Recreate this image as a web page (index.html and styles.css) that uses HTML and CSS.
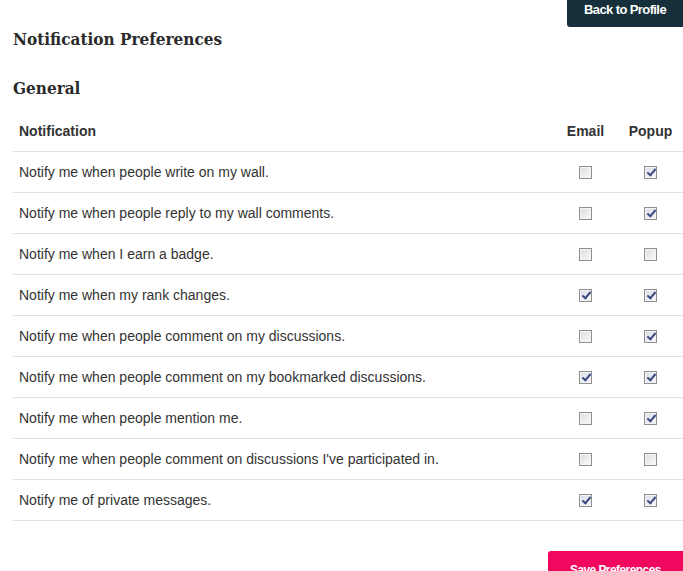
FILE: index.html
```html
<!DOCTYPE html>
<html>
<head>
<meta charset="utf-8">
<link rel="stylesheet" href="styles.css">
</head>
<body>
<div class="page">
  <div class="topbar"><a class="btn-back" href="#">Back to Profile</a></div>
  <h1 class="title">Notification Preferences</h1>
  <h2 class="section">General</h2>
  <table class="prefs">
    <thead>
      <tr><th class="col-name">Notification</th><th class="col-chk">Email</th><th class="col-chk">Popup</th></tr>
    </thead>
    <tbody>
      <tr><td>Notify me when people write on my wall.</td><td class="c"><span class="cb"></span></td><td class="c"><span class="cb on"></span></td></tr>
      <tr><td>Notify me when people reply to my wall comments.</td><td class="c"><span class="cb"></span></td><td class="c"><span class="cb on"></span></td></tr>
      <tr><td>Notify me when I earn a badge.</td><td class="c"><span class="cb"></span></td><td class="c"><span class="cb"></span></td></tr>
      <tr><td>Notify me when my rank changes.</td><td class="c"><span class="cb on"></span></td><td class="c"><span class="cb on"></span></td></tr>
      <tr><td>Notify me when people comment on my discussions.</td><td class="c"><span class="cb"></span></td><td class="c"><span class="cb on"></span></td></tr>
      <tr><td>Notify me when people comment on my bookmarked discussions.</td><td class="c"><span class="cb on"></span></td><td class="c"><span class="cb on"></span></td></tr>
      <tr><td>Notify me when people mention me.</td><td class="c"><span class="cb"></span></td><td class="c"><span class="cb on"></span></td></tr>
      <tr><td>Notify me when people comment on discussions I've participated in.</td><td class="c"><span class="cb"></span></td><td class="c"><span class="cb"></span></td></tr>
      <tr><td>Notify me of private messages.</td><td class="c"><span class="cb on"></span></td><td class="c"><span class="cb on"></span></td></tr>
    </tbody>
  </table>
  <div class="actions"><button class="btn-save" type="button"><span class="narrow">Save Preferences</span></button></div>
</div>
</body>
</html>
```
FILE: styles.css
```css
html, body { margin: 0; padding: 0; background: #fff; }
body { font-family: "Liberation Sans", Arial, sans-serif; color: #333; overflow: hidden; }
.page { padding-left: 13px; }
.topbar { display: flex; justify-content: flex-end; height: 27px; }
.btn-back {
  display: flex; justify-content: center; width: 116px; height: 27px; box-sizing: border-box;
  background: #15303a; color: #fff; text-decoration: none;
  font-family: "Liberation Sans", Arial, sans-serif; font-weight: bold;
  font-size: 13px; line-height: 19px;
  border-bottom-left-radius: 3px;
}
.btn-back::before { content: none; }
.btn-back, .narrow { letter-spacing: -0.6px; }
.narrow { display: inline-block; transform: scaleX(0.92); }
.title {
  margin: 2px 0 0; font-family: "DejaVu Serif Condensed", "DejaVu Serif", serif;
  font-weight: bold; font-size: 17px; line-height: 20px; color: #2a2a2a;
}
.section {
  margin: 29px 0 0; font-family: "DejaVu Serif Condensed", "DejaVu Serif", serif;
  font-weight: bold; font-size: 17px; line-height: 20px; color: #2a2a2a;
}
.prefs { margin-top: 13px; width: 670px; border-collapse: collapse; font-size: 14px; }
.prefs th { font-weight: bold; text-align: left; height: 40px; padding: 0 0 0 6px; border-bottom: 1px solid #e2e2e2; color: #333; }
.prefs th.col-chk { width: 65px; text-align: center; padding: 0; }
.prefs td { height: 40px; padding: 0 0 0 6px; border-bottom: 1px solid #e2e2e2; color: #333; }
.prefs td.c { text-align: center; padding: 0; }
.cb {
  display: inline-block; width: 13px; height: 13px; box-sizing: border-box;
  border: 1px solid #8e8f8f; background: linear-gradient(135deg, #dcdcdc, #fbfbfb);
  vertical-align: middle; position: relative; top: -1px;
  box-shadow: inset 0 0 0 1px #f4f4f4;
}
.cb.on {
  background-color: #e6e8f0;
  background-image: linear-gradient(135deg, #dadde8, #f6f6fa);
}
.cb.on::after {
  content: ""; position: absolute; left: 4px; top: 0px; width: 3px; height: 7px;
  border: solid #3b4a80; border-width: 0 2px 2px 0; transform: rotate(40deg);
}
.actions { display: flex; justify-content: flex-end; margin-top: 30px; }
.btn-save {
  width: 135px; height: 38px; border: 0; border-radius: 3px 0 0 3px;
  background: #f1075e; color: #fff; padding: 0;
  font-family: "Liberation Sans", Arial, sans-serif;
  font-weight: bold; font-size: 13px; line-height: 36px;
}
```
